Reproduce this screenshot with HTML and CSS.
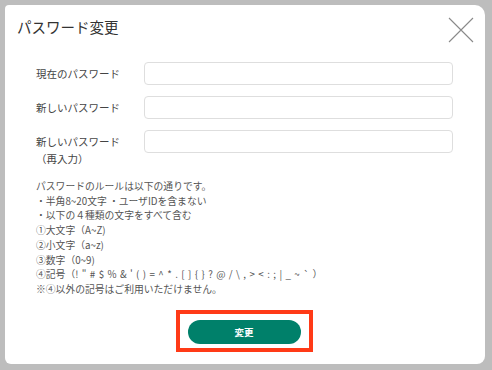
FILE: index.html
```html
<!DOCTYPE html>
<html lang="ja">

<head>
  <meta charset="UTF-8">
  <meta name="viewport" content="width=device-width, initial-scale=1.0">
  <title>パスワード変更</title>
  <link rel="stylesheet" href="styles.css">
</head>

<body>
  <div class="modal">
    <div class="modal-header">
      <h2 class="modal-title">パスワード変更</h2>
      <button class="close-button" aria-label="閉じる">
        <svg width="26" height="26" viewBox="0 0 26 26">
          <path d="M1 1 L25 25 M25 1 L1 25" stroke="#8a8a8a" stroke-width="1.1" fill="none" />
        </svg>
      </button>
    </div>

    <form class="password-form">
      <div class="form-row">
        <label class="form-label">現在のパスワード</label>
        <input type="password" class="form-input">
      </div>
      <div class="form-row">
        <label class="form-label">新しいパスワード</label>
        <input type="password" class="form-input">
      </div>
      <div class="form-row">
        <label class="form-label">新しいパスワード<br>（再入力）</label>
        <input type="password" class="form-input">
      </div>

      <!-- パスワードのルール -->
      <div class="rules">
        <p>パスワードのルールは以下の通りです。</p>
        <p>・半角8~20文字 ・ユーザIDを含まない</p>
        <p>・以下の４種類の文字をすべて含む</p>
        <p>①大文字（A~Z)</p>
        <p>②小文字（a~z)</p>
        <p>③数字（0~9)</p>
        <p>④記号（<span class="symbols">!"#$%&amp;'()=^*.[]{}?@/\,&gt;&lt;:;|_~`</span>）</p>
        <p>※④以外の記号はご利用いただけません。</p>
      </div>

      <div class="submit-area">
        <div class="highlight">
          <button type="button" class="submit-button">変更</button>
        </div>
      </div>
    </form>
  </div>
</body>

</html>
```

FILE: styles.css
```css
/* 背景とモーダル */
body {
  font-family: 'Noto Sans CJK JP', 'Noto Sans', sans-serif;
  background: #bdbdbd;
  margin: 0;
  padding: 5px 7px 6px 5px;
  height: 359px;
}

.modal {
  width: 480px;
  height: 359px;
  background: #fff;
  border-radius: 4px 10px 8px 6px;
  box-sizing: border-box;
}

.modal-header {
  height: 44px;
  display: flex;
  align-items: center;
  justify-content: space-between;
  padding: 0 11px 0 12px;
}

.modal-title {
  margin: 0;
  font-size: 14.5px;
  font-weight: normal;
  color: #333;
  line-height: 20px;
}

.close-button {
  background: none;
  border: none;
  padding: 0;
  margin-top: 5px;
  width: 26px;
  height: 26px;
  cursor: pointer;
}

.close-button svg {
  display: block;
}

.password-form {
  padding: 13px 32px 0 31px;
}

.form-row {
  display: flex;
  align-items: flex-start;
  margin-bottom: 11px;
}

.form-label {
  width: 108px;
  flex-shrink: 0;
  padding-top: 3px;
  font-size: 10.5px;
  line-height: 17px;
  color: #444;
}

.form-input {
  flex: 1;
  height: 23px;
  box-sizing: border-box;
  border: 1px solid #dedede;
  border-radius: 4px;
  outline: none;
}

.rules {
  margin-top: 12px;
  font-size: 9.8px;
  line-height: 14.7px;
  color: #555;
}

.rules p {
  margin: 0;
}

.symbols {
  letter-spacing: 3.4px;
}

.submit-area {
  display: flex;
  justify-content: center;
  margin-top: 13px;
  margin-left: -1px;
}

.highlight {
  border: 4px solid #ff3a17;
  padding: 6px 8px 4px;
}

.submit-button {
  display: block;
  width: 113px;
  height: 24px;
  border: none;
  border-radius: 12px;
  background: #00806a;
  color: #fff;
  font-family: 'Noto Sans CJK JP', sans-serif;
  font-size: 9.5px;
  font-weight: bold;
  cursor: pointer;
}
```
